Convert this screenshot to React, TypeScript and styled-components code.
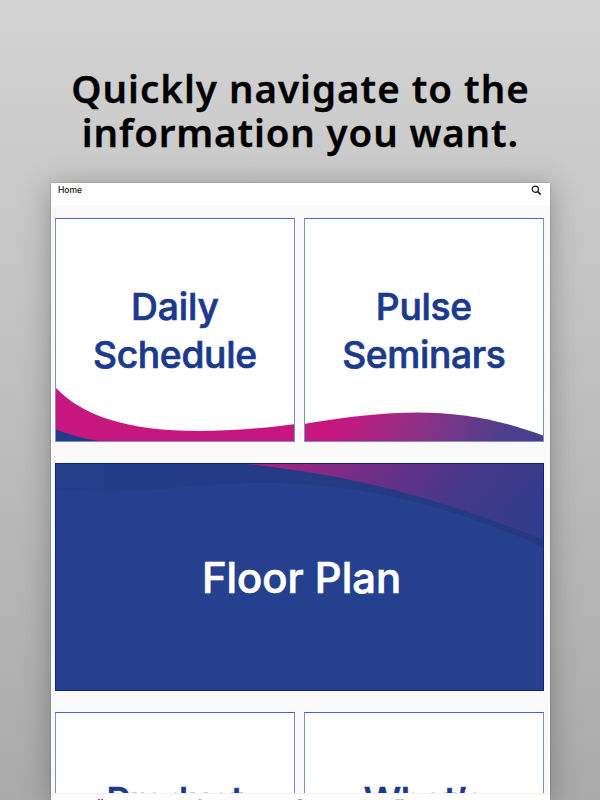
import React from "react";
import styled, { createGlobalStyle } from "styled-components";

const Global = createGlobalStyle`
  *{box-sizing:border-box}
  body{margin:0;overflow:hidden}
`;
const Page = styled.main`
  width:600px;height:800px;overflow:hidden;
  display:flex;flex-direction:column;align-items:center;
  background:linear-gradient(180deg,#d3d3d3 0%,#c9c9c9 24%,#aaa 100%);
`;
const Headline = styled.h1`
  margin:0;height:183px;flex:none;padding-top:66px;
  font:600 38.5px/44px "Noto Sans",sans-serif;color:#000;text-align:center;
  -webkit-text-stroke:.3px #000;
`;
const Line = styled.span<{ $spacing: number }>`
  display:block;white-space:nowrap;
  letter-spacing:${p => p.$spacing}px;margin-right:${p => -p.$spacing}px;
`;
const Device = styled.section`
  width:499px;height:617px;flex:none;overflow:hidden;
  display:flex;flex-direction:column;background:#f9f9f9;
`;
const Shadow = styled.div`
  width:499px;height:617px;flex:none;
  box-shadow:0 0 2px rgba(0,0,0,.25),0 3px 28px rgba(0,0,0,.28);
`;
const Header = styled.header`
  height:22px;flex:none;background:#fff;display:flex;justify-content:space-between;
  padding:2px 8px 0 7.5px;font:500 8.5px/11px Inter,sans-serif;color:#111;
`;
const Search = styled.svg`width:11px;height:11px;display:block;`;
const Feed = styled.div`
  flex:1;min-height:0;overflow:hidden;padding:13px 5px 0 4.5px;
  display:grid;grid-template-columns:240px 240px;grid-template-rows:224px 228px 224px;
  column-gap:9px;row-gap:21px;
`;
const Card = styled.article<{ $wide?: boolean }>`
  position:relative;overflow:hidden;
  ${p => p.$wide && "grid-column:1 / -1;"}
  background:${p => (p.$wide ? "#25408f" : "#fff")};
  border:1px solid ${p => (p.$wide ? "#0f2288" : "#7f8fc6")};
  ${p => !p.$wide && "border-top-color:#4f65b1;"}
  display:flex;flex-direction:column;align-items:center;justify-content:center;
`;
const Art = styled.svg`position:absolute;inset:-1px;width:calc(100% + 2px);height:calc(100% + 2px);`;
const Title = styled.h2<{ $large?: boolean }>`
  position:relative;margin:0;text-align:center;
  padding:${p => (p.$large ? "1px 0 0 4px" : "1px 0 0")};
  min-height:${p => (p.$large ? 0 : 97)}px;
  font:${p => (p.$large ? "500 41.8px/50px" : "500 37.2px/48px")} Inter,sans-serif;
  -webkit-text-stroke:.7px currentColor;
  color:${p => (p.$large ? "#fff" : "#1b3a8e")};
`;
const TabBar = styled.nav`
  height:7px;flex:none;background:#fff;border-top:1px solid #f1f1f1;overflow:hidden;
  display:grid;grid-template-columns:repeat(5,1fr);justify-items:center;padding-top:5px;
`;
const TabIcon = styled.svg`width:12px;height:12px;display:block;`;

export default function App() {
  return (
    <>
      <Global />
      <Page>
        <Headline>
          <Line $spacing={1}>Quickly navigate to the</Line>
          <Line $spacing={0.85}>information you want.</Line>
        </Headline>
        <Shadow>
          <Device>
            <Header>
              <span>Home</span>
              <Search viewBox="0 0 11 11" fill="none" stroke="#151515">
                <circle cx="4.3" cy="4.2" r="3.1" strokeWidth="1.2" />
                <path d="M6.6 6.5 9.7 9.6" strokeWidth="1.5" />
              </Search>
            </Header>
            <Feed>
              <Card>
                <Art viewBox="0 0 240 224" preserveAspectRatio="none">
                  <path d="M0 169C37 209 111 223 240 206V224H0Z" fill="#c6177f" />
                  <path d="M0 211Q25 221 52 224H0Z" fill="#213b88" />
                  <path d="M0 223.5H240" stroke="#392c83" />
                </Art>
                <Title>
                  <Line $spacing={-0.1}>Daily</Line>
                  <Line $spacing={-0.3}>Schedule</Line>
                </Title>
              </Card>
              <Card>
                <Art viewBox="0 0 240 224" preserveAspectRatio="none">
                  <defs>
                    <linearGradient id="wave" gradientUnits="userSpaceOnUse" x1="38" y1="200" x2="180" y2="260">
                      <stop stopColor="#c6177f" />
                      <stop offset=".5" stopColor="#8b3286" />
                      <stop offset="1" stopColor="#4d3e8d" />
                    </linearGradient>
                  </defs>
                  <path d="M0 206C100 189 163 189 240 218V224H0Z" fill="url(#wave)" />
                  <path d="M0 223.5H240" stroke="#392c83" />
                </Art>
                <Title>
                  <Line $spacing={-0.3}>Pulse</Line>
                  <Line $spacing={-0.35}>Seminars</Line>
                </Title>
              </Card>
              <Card $wide>
                <Art viewBox="0 0 489 228" preserveAspectRatio="none">
                  <defs>
                    <linearGradient id="sweep" gradientUnits="userSpaceOnUse" x1="215" y1="0" x2="415" y2="170">
                      <stop stopColor="#a5237f" />
                      <stop offset=".3" stopColor="#722d87" />
                      <stop offset=".62" stopColor="#453889" />
                      <stop offset="1" stopColor="#2c3e8e" />
                    </linearGradient>
                    <linearGradient id="band" x1="0" x2="1">
                      <stop stopColor="#243e8b" />
                      <stop offset="1" stopColor="#23387f" />
                    </linearGradient>
                  </defs>
                  <path d="M0 0H489V85C377 34 287 20 206 20C130 20 85 34 0 26Z" fill="url(#band)" />
                  <path d="M181 0C296 11 383 35 489 77V0Z" fill="url(#sweep)" />
                  <path d="M0 .5H489M0 227.5H489" stroke="#0c1478" />
                </Art>
                <Title $large>
                  <Line $spacing={0}>Floor Plan</Line>
                </Title>
              </Card>
              <Card>
                <Title>
                  <Line $spacing={-0.3}>Product</Line>
                </Title>
              </Card>
              <Card>
                <Title>
                  <Line $spacing={-0.1}>What’s</Line>
                </Title>
              </Card>
            </Feed>
            <TabBar>
              <TabIcon viewBox="0 0 12 12"><path d="M4 0H6M7 0H9" stroke="#c73b7f" strokeWidth="2" /></TabIcon>
              <TabIcon viewBox="0 0 12 12"><circle cx="6" cy="3" r="2.5" fill="none" stroke="#aaa" /></TabIcon>
              <TabIcon viewBox="0 0 12 12"><circle cx="6" cy="4" r="4" fill="#999" /></TabIcon>
              <TabIcon viewBox="0 0 12 12"><path d="M2 1H10V10H2ZM4 0V2M8 0V2" fill="#bbb" stroke="#999" /></TabIcon>
              <TabIcon viewBox="0 0 12 12"><path d="M2 1.5H10" stroke="#eee" /></TabIcon>
            </TabBar>
          </Device>
        </Shadow>
      </Page>
    </>
  );
}
